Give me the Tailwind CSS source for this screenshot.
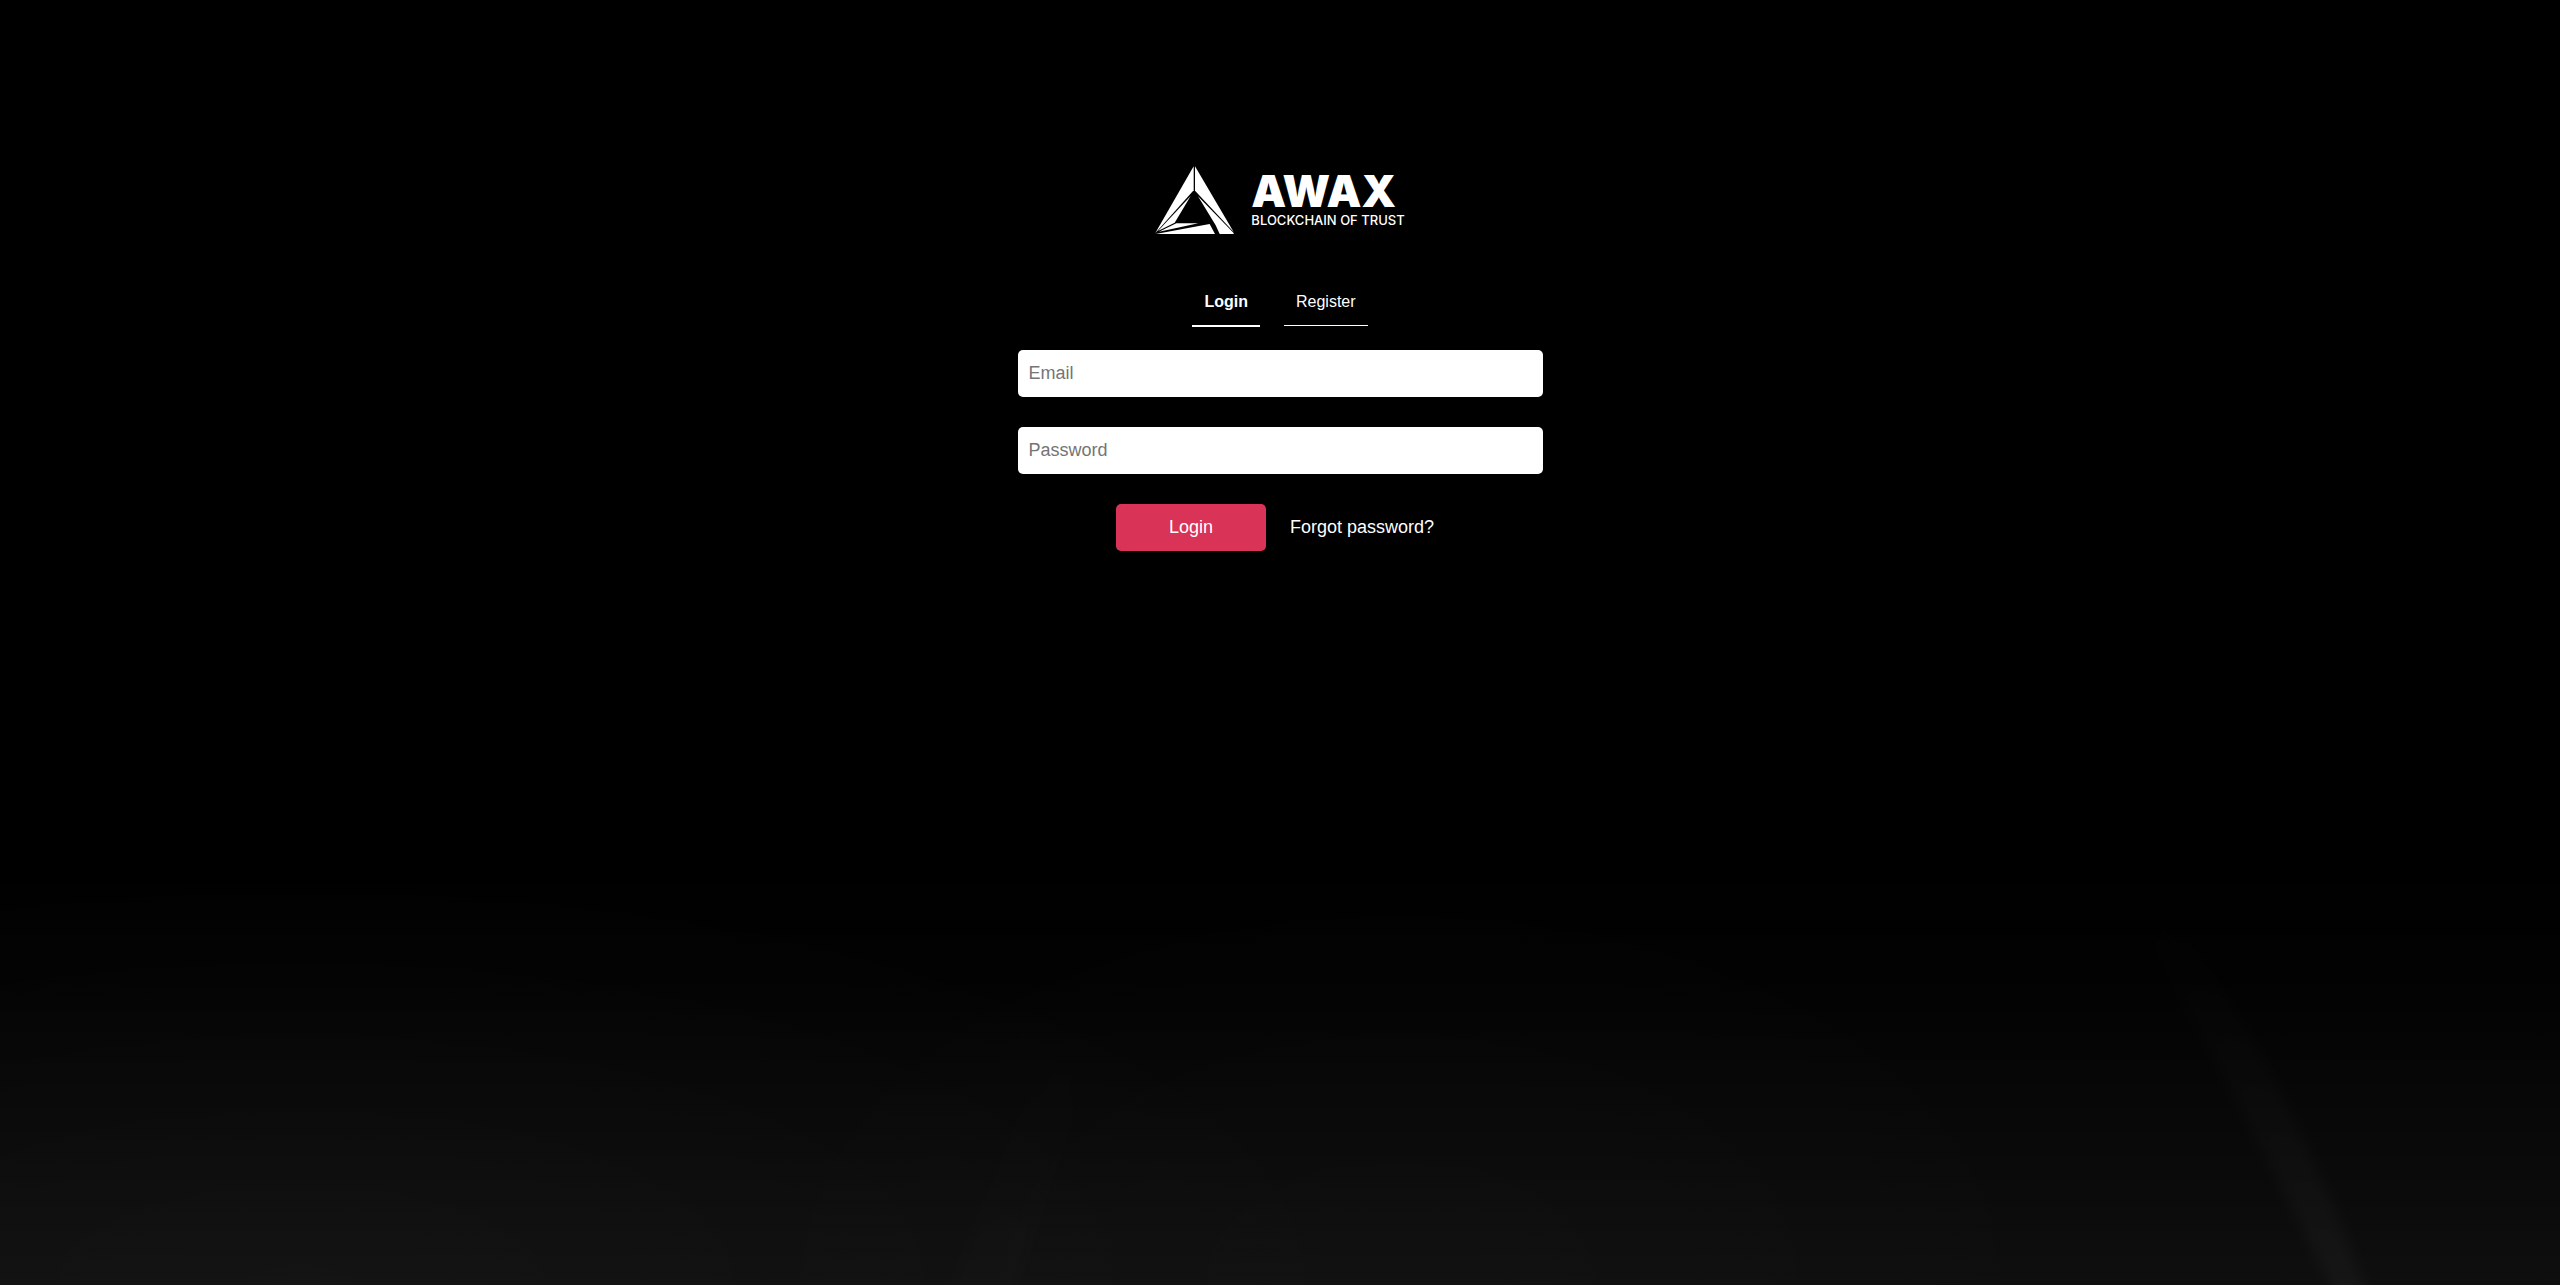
<!DOCTYPE html>
<html lang="en">
<head>
<meta charset="utf-8">
<meta name="viewport" content="width=device-width, initial-scale=1">
<title>AWAX - Login</title>
<script src="https://cdn.jsdelivr.net/npm/@tailwindcss/browser@4"></script>
</head>
<body class="relative min-h-screen bg-black font-['Liberation_Sans',Arial,sans-serif] text-white">
  <!-- faint light rising from the bottom edge -->
  <svg class="absolute inset-x-0 bottom-0 h-1/3 w-full" viewBox="0 0 2560 428" preserveAspectRatio="none" aria-hidden="true">
    <defs>
      <linearGradient id="rise" x1="0" y1="0" x2="0" y2="1">
        <stop offset="0" stop-color="#fff" stop-opacity="0"/>
        <stop offset=".3" stop-color="#fff" stop-opacity=".01"/>
        <stop offset="1" stop-color="#fff" stop-opacity=".058"/>
      </linearGradient>
      <radialGradient id="glow" cx=".5" cy="1" r="1" gradientTransform="translate(.25 0) scale(.5 1)">
        <stop offset="0" stop-color="#fff" stop-opacity=".024"/>
        <stop offset="1" stop-color="#fff" stop-opacity="0"/>
      </radialGradient>
      <linearGradient id="beam" x1="0" y1="0" x2="0" y2="1">
        <stop offset="0" stop-color="#fff" stop-opacity="0"/>
        <stop offset="1" stop-color="#fff" stop-opacity=".032"/>
      </linearGradient>
      <filter id="soft" x="-50%" y="-20%" width="200%" height="140%"><feGaussianBlur stdDeviation="7 4"/></filter>
    </defs>
    <rect width="2560" height="428" fill="url(#rise)"/>
    <rect x="-800" width="2200" height="428" fill="url(#glow)"/>
    <rect x="700" width="1400" height="428" fill="url(#glow)" fill-opacity=".6"/>
    <path d="M2130 50L2180 70Q2290 220 2368 440L2336 440Q2250 260 2130 50Z" fill="url(#beam)" filter="url(#soft)"/>
    <path d="M1060 160L1110 160Q1060 300 1010 440L950 440Q1000 300 1060 160Z" fill="url(#beam)" fill-opacity=".3" filter="url(#soft)"/>
  </svg>

  <main class="relative mx-auto flex w-full max-w-[525px] flex-col items-center pt-[166px]">
    <h1 class="flex h-[70px] gap-4 font-['Inter',sans-serif]">
      <svg class="h-[68px] w-20" viewBox="18 18 240 204" fill="#fff" aria-hidden="true">
        <path d="M134 19V91L22 216L19 219Z"/>
        <path d="M138 19L254 216L138 92Z"/>
        <path d="M125 108L77 188L27 213Z"/>
        <path d="M82 190L148 190L30 215Z"/>
        <path d="M182 192L198 222H20Z"/>
        <path d="M147 109L254 219L254 222H212L200 196Z"/>
      </svg>
      <span class="flex flex-col pt-1">
        <span class="text-[44px] leading-[42px] font-black">AWAX</span>
        <span class="text-[13px] leading-4 font-medium">BLOCKCHAIN OF TRUST</span>
      </span>
    </h1>

    <nav class="mt-[53px] flex h-[38px] items-start gap-6 text-base leading-[26px]">
      <a href="#login" aria-current="page" class="h-[38px] border-b-2 border-white px-3 font-bold">Login</a>
      <a href="#register" class="h-[37px] border-b border-white px-3">Register</a>
    </nav>

    <form class="mt-[23px] flex w-full flex-col gap-[30px] text-lg">
      <input type="email" aria-label="Email" placeholder="Email" class="h-[47px] w-full rounded-[5px] bg-white px-[11px] text-black placeholder:text-[#757575]">
      <input type="password" aria-label="Password" placeholder="Password" class="h-[47px] w-full rounded-[5px] bg-white px-[11px] text-black placeholder:text-[#757575]">
      <div class="flex h-[47px] justify-center gap-6 pr-[10px] leading-[46px]">
        <button type="button" class="w-[150px] rounded-[5px] bg-[#d93358] pb-px text-white">Login</button>
        <a href="#forgot">Forgot password?</a>
      </div>
    </form>
  </main>
</body>
</html>
